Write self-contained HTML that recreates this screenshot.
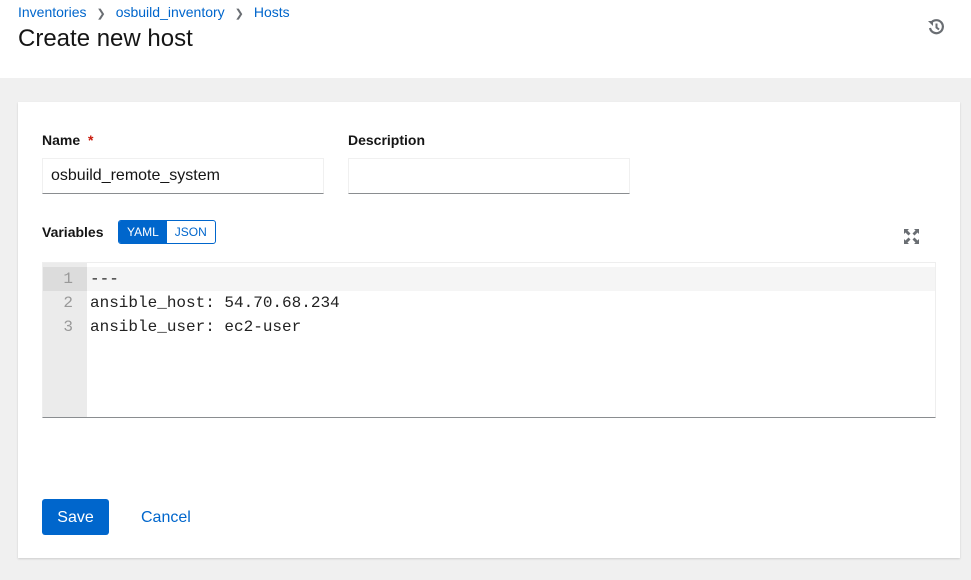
<!DOCTYPE html>
<html><head><style>
*{margin:0;padding:0;box-sizing:border-box}
body{width:971px;height:580px;background:#f0f0f0;font-family:"Liberation Sans",sans-serif;position:relative;overflow:hidden;color:#151515}
.hdr{position:absolute;left:0;top:0;width:971px;height:78px;background:#fff}
.bc{position:absolute;top:4px;left:18px;font-size:14px;color:#06c;white-space:nowrap}
.bc span.s{color:#6a6e73;margin:0 10px;font-size:11px}
h1{position:absolute;left:18px;top:25px;font-size:24px;font-weight:normal}
.card{position:absolute;left:18px;top:102px;width:942px;height:456px;background:#fff;box-shadow:0 1px 2px rgba(0,0,0,.15)}
.lbl{position:absolute;font-size:14px;font-weight:bold}
.inp{position:absolute;height:36px;border:1px solid #f0f0f0;border-bottom-color:#8a8d90;font-size:16px;padding:8px 8px}
.tog{position:absolute;left:100px;top:118px;height:24px;display:flex;border:1px solid #06c;border-radius:3px;overflow:hidden;font-size:12px}
.tog div{padding:4px 8px}
.ed{position:absolute;left:24px;top:160px;width:894px;height:156px;border:1px solid #eee;border-bottom:1px solid #8a8d90;font-family:"Liberation Mono",monospace;font-size:16px}
.gut{position:absolute;left:0;top:0;width:44px;height:100%;background:#ebebeb}
.ln{position:absolute;left:0;width:100%;height:24px;line-height:24px}
.ln .n{position:absolute;left:0;width:30px;text-align:right;color:#999}
.ln .t{position:absolute;left:47px;color:#222}
.btn{position:absolute;left:24px;top:397px;width:67px;height:36px;background:#06c;color:#fff;border-radius:3px;font-size:16px;text-align:center;line-height:38px}
.cancel{position:absolute;left:123px;top:397px;line-height:38px;font-size:16px;color:#06c}
</style></head><body>
<div class="hdr">
<div class="bc">Inventories<span class="s">&#10095;</span>osbuild_inventory<span class="s">&#10095;</span>Hosts</div>
<h1>Create new host</h1>
<svg style="position:absolute;left:927px;top:18px" width="18" height="18" viewBox="0 0 18 18"><path d="M4 5 A6.5 6.5 0 1 1 3 10" fill="none" stroke="#6a6e73" stroke-width="2.2"/><path d="M1 3 L6 3 L6 8 Z" fill="#6a6e73"/><path d="M9.5 5.5 V9.5 L12 11.5" fill="none" stroke="#6a6e73" stroke-width="2"/></svg>
</div>
<div class="card">
<div class="lbl" style="left:24px;top:30px">Name <span style="color:#c9190b;margin-left:4px">*</span></div>
<div class="inp" style="left:24px;top:56px;width:282px">osbuild_remote_system</div>
<div class="lbl" style="left:330px;top:30px">Description</div>
<div class="inp" style="left:330px;top:56px;width:282px"></div>
<div class="lbl" style="left:24px;top:122px">Variables</div>
<div class="tog"><div style="background:#06c;color:#fff">YAML</div><div style="color:#06c">JSON</div></div>
<svg style="position:absolute;left:886px;top:127px" width="15" height="15" viewBox="0 0 15 15" fill="#6a6e73"><path d="M0 0H5L3.5 1.5L6.5 4.5L4.5 6.5L1.5 3.5L0 5Z M15 0V5L13.5 3.5L10.5 6.5L8.5 4.5L11.5 1.5L10 0Z M0 15V10L1.5 11.5L4.5 8.5L6.5 10.5L3.5 13.5L5 15Z M15 15H10L11.5 13.5L8.5 10.5L10.5 8.5L13.5 11.5L15 10Z"/></svg>
<div class="ed">
<div class="gut"></div>
<div class="ln" style="top:4px;background:#f5f5f5"><div style="position:absolute;left:0;width:44px;height:24px;background:#dcdcdc"></div><span class="n">1</span><span class="t">---</span></div>
<div class="ln" style="top:28px"><span class="n">2</span><span class="t">ansible_host: 54.70.68.234</span></div>
<div class="ln" style="top:52px"><span class="n">3</span><span class="t">ansible_user: ec2-user</span></div>
</div>
<div class="btn">Save</div>
<div class="cancel">Cancel</div>
</div>
</body></html>
